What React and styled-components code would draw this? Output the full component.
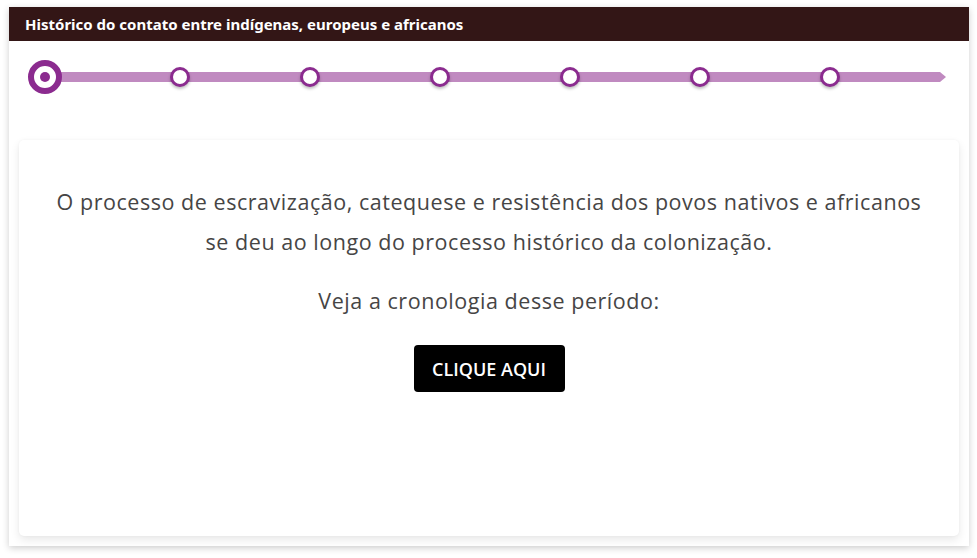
import React from "react";
import styled, { createGlobalStyle } from "styled-components";

const Global = createGlobalStyle`
  html, body { margin: 0; padding: 0; background: #ffffff; }
  body { font-family: "Open Sans", sans-serif; }
`;

const Page = styled.div`
  padding: 7px 8px 12px 9px;
`;

const Frame = styled.div`
  background: #fff;
  box-shadow: 0 2px 7px rgba(0,0,0,0.2);
  display: flex;
  flex-direction: column;
  height: 539px;
`;

const Header = styled.div`
  background: #331616;
  color: #fff;
  height: 34px;
  flex: none;
  display: flex;
  align-items: center;
  padding-left: 16px;
  font-family: "Noto Sans", sans-serif;
  font-weight: 700;
  font-size: 15px;
`;

const TimelineBar = styled.div`
  background: #fff;
  height: 90px;
  flex: none;
  box-sizing: border-box;
  display: flex;
  align-items: flex-start;
  padding: 31px 29px 0 18px;
`;

const Track = styled.div`
  position: relative;
  flex: 1;
  height: 10px;
  background: #c08ac0;
  margin-left: 18px;
  &::after {
    content: "";
    position: absolute;
    right: -6px;
    top: 0;
    border-left: 6px solid #c08ac0;
    border-top: 5px solid transparent;
    border-bottom: 5px solid transparent;
  }
`;

const Dot = styled.div`
  position: absolute;
  top: 50%;
  transform: translate(-50%, -50%);
  width: 14px;
  height: 14px;
  border: 3px solid #8b2b8f;
  background: #fff;
  border-radius: 50%;
  box-shadow: 0 2px 3px rgba(0,0,0,0.25);
`;

const ActiveDot = styled.div`
  position: absolute;
  top: 50%;
  left: 0;
  transform: translate(-50%, -50%);
  width: 22px;
  height: 22px;
  border: 6.5px solid #8b2b8f;
  background: #fff;
  border-radius: 50%;
  display: flex;
  align-items: center;
  justify-content: center;
  &::after {
    content: "";
    width: 10px;
    height: 10px;
    border-radius: 50%;
    background: #8b2b8f;
  }
`;

const Card = styled.div`
  margin: 9px 10px 10px 10px;
  flex: 1;
  background: #fff;
  border-radius: 5px;
  box-shadow: 0 4px 10px rgba(0,0,0,0.09), 0 0 3px rgba(0,0,0,0.04);
  display: flex;
  flex-direction: column;
  align-items: center;
  padding-top: 42px;
  font-family: "Open Sans", sans-serif;
  color: #464545;
`;

const Para = styled.p`
  margin: 0;
  font-size: 21.5px;
  line-height: 40px;
  text-align: center;
  letter-spacing: 0.54px;
`;

const Lead = styled(Para)`
  margin-top: 19px;
`;

const Button = styled.button`
  margin-top: 24px;
  background: #000;
  color: #fff;
  border: none;
  border-radius: 4px;
  width: 151px;
  height: 47px;
  font-family: "Open Sans", sans-serif;
  font-weight: 600;
  font-size: 18px;
  cursor: pointer;
`;

const positions = [135, 265, 395, 525, 655, 785];

export default function App() {
  return (
    <>
      <Global />
      <Page>
        <Frame>
          <Header>Histórico do contato entre indígenas, europeus e africanos</Header>
          <TimelineBar>
            <Track>
              <ActiveDot />
              {positions.map((p) => (
                <Dot key={p} style={{ left: p }} />
              ))}
            </Track>
          </TimelineBar>
          <Card>
            <Para>
              O processo de escravização, catequese e resistência dos povos nativos e africanos
              <br />
              se deu ao longo do processo histórico da colonização.
            </Para>
            <Lead>Veja a cronologia desse período:</Lead>
            <Button>CLIQUE AQUI</Button>
          </Card>
        </Frame>
      </Page>
    </>
  );
}
